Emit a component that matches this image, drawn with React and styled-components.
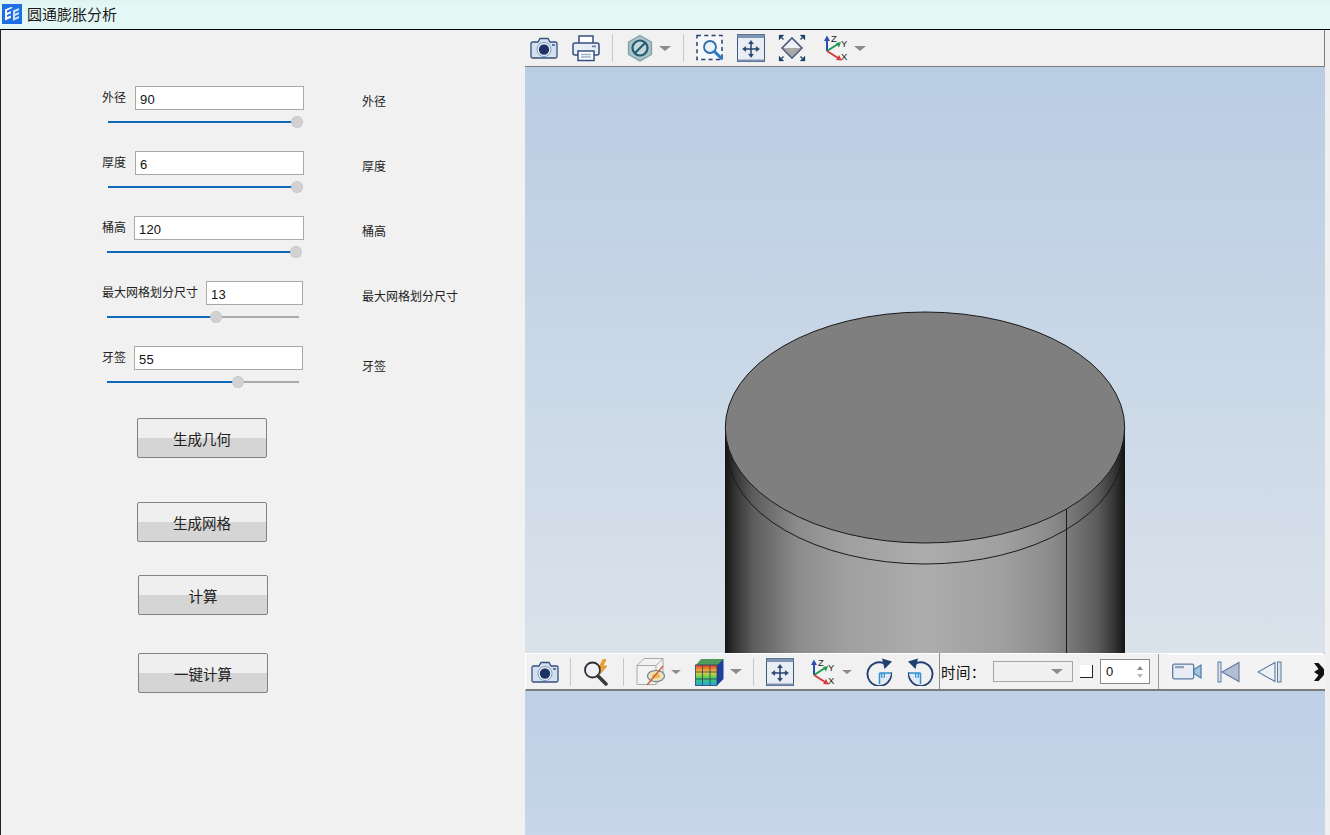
import React from "react";
import styled, { createGlobalStyle } from "styled-components";

const Global = createGlobalStyle`
  html, body { margin: 0; padding: 0; height: 100%; background: #f0f0f0; overflow: hidden; }
  #root { height: 100%; }
  * { box-sizing: border-box; }
`;

const CJK = `"Noto Sans CJK SC", "Liberation Sans", sans-serif`;

const Window = styled.div`
  width: 1330px;
  height: 835px;
  display: flex;
  flex-direction: column;
  font-family: ${CJK};
  color: #111;
  overflow: hidden;
`;
const TitleBar = styled.header`
  height: 30px;
  flex: none;
  display: flex;
  align-items: center;
  gap: 5px;
  padding: 0 0 1px 2px;
  background: linear-gradient(#dff3f0, #e3f8f5 6px);
  border-bottom: 1px solid #000;
`;
const TitleText = styled.span`
  font-size: 15px;
  line-height: 20px;
  color: #1a1a1a;
`;
const Body = styled.main`
  flex: 1;
  min-height: 0;
  display: flex;
`;
const ControlPanel = styled.section`
  width: 525px;
  flex: none;
  background: #f1f1f1;
  border-left: 1px solid #222;
  padding: 56px 0 0 100px;
`;
const ParamRow = styled.div`
  height: 65px;
  display: grid;
  grid-template-columns: 261px auto;
`;
const FieldColumn = styled.div`
  display: flex;
  flex-direction: column;
`;
const FieldLine = styled.label`
  width: ${(p) => p.$width}px;
  height: 24px;
  display: flex;
  align-items: center;
  padding-left: 1px;
`;
const FieldLabel = styled.span`
  width: ${(p) => p.$width}px;
  flex: none;
  font-size: 12px;
  line-height: 16px;
  margin-top: -3px;
  color: #222;
`;
const FieldInput = styled.input`
  flex: 1;
  min-width: 0;
  height: 24px;
  border: 1px solid #a9a9a9;
  background: #fff;
  padding: 2px 0 0 4px;
  font: 13px "Liberation Sans", sans-serif;
  letter-spacing: 0.2px;
  color: #111;
  outline: none;
`;
const Track = styled.div`
  position: relative;
  margin: 11px 0 0 ${(p) => p.$left}px;
  width: ${(p) => p.$width}px;
  height: 2px;
  background: #ababab;
`;
const TrackFill = styled.div`
  height: 100%;
  background: #0f69b9;
`;
const Thumb = styled.span`
  position: absolute;
  top: -5px;
  width: 12px;
  height: 12px;
  margin-left: -6px;
  border-radius: 50%;
  background: #d2d2d2;
  border: 1px dotted #bdbdbd;
`;
const ValueLabel = styled.span`
  font-size: 12px;
  line-height: 16px;
  color: #222;
  padding-top: ${(p) => p.$top}px;
`;
const Action = styled.button`
  display: block;
  width: 130px;
  height: 40px;
  margin: ${(p) => p.$top}px 0 0 ${(p) => p.$left}px;
  border: 1px solid #828282;
  border-radius: 2px;
  background: linear-gradient(#efefef 50%, #d5d5d5 50%);
  font: 14.5px ${CJK};
  color: #222;
  padding: 0;
`;

const Stage = styled.section`
  width: 800px;
  flex: none;
  display: flex;
  flex-direction: column;
`;
const TopBar = styled.div`
  height: 37px;
  flex: none;
  display: flex;
  align-items: center;
  padding-left: 5px;
  background: #f1f1f1;
  border-right: 1px solid #7b7b7b;
  border-bottom: 1px solid #7b7b7b;
`;
const Viewport = styled.div`
  position: relative;
  height: 586px;
  flex: none;
  overflow: hidden;
  background: linear-gradient(#b9cde3, #dae2eb);
`;
const ModelArt = styled.svg`
  position: absolute;
  inset: 0;
  display: block;
`;
const LowerBar = styled.div`
  height: 38px;
  flex: none;
  display: flex;
  align-items: center;
  padding-left: 5px;
  background: #f1f1f1;
  border-top: 1px solid #fff;
  border-left: 1px solid #fff;
  border-right: 2px solid #7b7b7b;
  border-bottom: 2px solid #7b7b7b;
`;
const LowerView = styled.div`
  flex: 1;
  background: linear-gradient(#bdd0e6, #c7d6e8);
`;
const Tool = styled.span`
  display: flex;
  flex: none;
  margin-left: ${(p) => p.$ml || 0}px;
`;
const Sep = styled.span`
  flex: none;
  width: 1px;
  height: ${(p) => p.$h || 28}px;
  margin-left: ${(p) => p.$ml || 0}px;
  background: ${(p) => p.$dark ? "#8d8d8d" : "#c8c8c8"};
`;
const Caret = styled.span`
  flex: none;
  width: 0;
  height: 0;
  margin-left: ${(p) => p.$ml || 0}px;
  border-left: ${(p) => p.$w || 6}px solid transparent;
  border-right: ${(p) => p.$w || 6}px solid transparent;
  border-top: ${(p) => (p.$w || 6) - 1}px solid #8b8b8b;
`;
const TimeLabel = styled.span`
  flex: none;
  margin-left: 1px;
  width: 52px;
  font-size: 14.5px;
  line-height: 18px;
  letter-spacing: 0.4px;
`;
const Combo = styled.div`
  width: 80px;
  height: 21px;
  flex: none;
  display: flex;
  align-items: center;
  justify-content: flex-end;
  padding-right: 9px;
  border: 1px solid #a5a5a5;
  background: #f0f0f0;
`;
const RaisedBox = styled.span`
  flex: none;
  width: 13px;
  height: 13px;
  margin-left: 7px;
  background: #fff;
  border-right: 1px solid #222;
  border-bottom: 1px solid #222;
`;
const Spin = styled.div`
  width: 50px;
  height: 25px;
  flex: none;
  margin-left: 7px;
  display: flex;
  align-items: center;
  justify-content: space-between;
  padding: 0 5px 0 5px;
  border: 1px solid #8a8a8a;
  background: #fff;
  font: 13px "Liberation Sans", sans-serif;
`;
const SpinArrows = styled.svg`
  display: block;
`;
const PlayGroup = styled.div`
  flex: 1;
  align-self: stretch;
  display: flex;
  align-items: center;
  margin-left: 8px;
  padding-left: 5px;
  background: #f3f3f3;
  border-left: 1px solid #9a9a9a;
  box-shadow: inset 9px 0 0 #f1f1f1, inset 0 1px 0 #fff;
`;
const SideStrip = styled.aside`
  flex: 1;
  background: #f0f0f0;
`;

const Camera = () => (
  <svg width="28" height="24" viewBox="0 0 28 24">
    <path d="M2 6h6l2-3.5h8L20 6h5.5a1.5 1.5 0 0 1 1.5 1.5v13a1.5 1.5 0 0 1-1.5 1.5h-23A1.5 1.5 0 0 1 1 20.500v-13A1.500 1.500 0 0 1 2.500 6z" fill="#d3e0ef" stroke="#36507f" strokeWidth="1.300" />
    <circle cx="14" cy="13.500" r="7" fill="#f4f7fb" stroke="#7f97bb" />
    <circle cx="14" cy="13.500" r="5.200" fill="#1d3566" />
    <rect x="22" y="8" width="3" height="2" fill="#5f7ba6" />
  </svg>
);
const Printer = () => (
  <svg width="28" height="28" viewBox="0 0 28 28">
    <path d="M7 9V2h14v7" fill="#fff" stroke="#35507e" strokeWidth="1.500" />
    <rect x="1" y="9" width="26" height="12" rx="2" fill="#e7edf5" stroke="#35507e" strokeWidth="1.500" />
    <rect x="20" y="11.500" width="4" height="1.800" fill="#6d84a8" />
    <path d="M6 17h16v9.500H6z" fill="#fff" stroke="#35507e" strokeWidth="1.500" />
    <path d="M9 20.500h10M9 23h10" stroke="#9db0ca" strokeWidth="1.600" />
  </svg>
);
const Hexagon = () => (
  <svg width="28" height="28" viewBox="0 0 28 28">
    <path d="M14 1.500 25.500 8v12.500L14 27 2.500 20.500V8z" fill="#a9c3c6" stroke="#7c9da3" strokeWidth="1.200" />
    <circle cx="14" cy="14" r="7.500" fill="#c4d5d8" stroke="#1f5d6f" strokeWidth="2.200" />
    <path d="M9 19 19 9" stroke="#1f5d6f" strokeWidth="2.200" />
  </svg>
);
const ZoomBox = () => (
  <svg width="28" height="28" viewBox="0 0 28 28">
    <rect x="1" y="1.500" width="25" height="24" fill="#f6f8fb" stroke="#27406f" strokeWidth="1.500" strokeDasharray="4 3.300" />
    <circle cx="14" cy="13" r="6" fill="#e9f1f9" stroke="#2f6da8" strokeWidth="1.800" />
    <path d="m18.500 17.500 7 7" stroke="#2b7cc0" strokeWidth="3" strokeLinecap="round" />
  </svg>
);
const FitView = () => (
  <svg width="28" height="28" viewBox="0 0 28 28">
    <rect x="0.500" y="0.500" width="27" height="27" fill="#e9eef5" stroke="#40597f" />
    <rect x="0.500" y="0.500" width="27" height="3.500" fill="#7e92b1" />
    <rect x="0.500" y="25.500" width="27" height="2" fill="#7e92b1" />
    <g stroke="#26426f" strokeWidth="1.500" fill="#26426f">
      <path d="M14 9v12M8 15h12" />
      <path d="m14 6.500 2.500 3.200h-5zM14 23.500l2.500-3.200h-5zM5.500 15l3.200-2.500v5zM22.500 15l-3.200-2.500v5z" strokeWidth=".5" />
    </g>
  </svg>
);
const Diamond = () => (
  <svg width="28" height="28" viewBox="0 0 28 28">
    <path d="M14 4 24 14 14 24 4 14z" fill="#eef1f5" stroke="#4a5f80" strokeWidth="1.300" />
    <path d="M14 14h10L14 24 4 14z" fill="#a9a9a9" />
    <path d="M14 4 24 14 14 24 4 14z" fill="none" stroke="#4a5f80" strokeWidth="1.300" />
    <g fill="#26426f" stroke="#26426f">
      <path d="M1 1h5L1 6zM27 1h-5l5 5zM1 27h5l-5-5zM27 27h-5l5-5z" strokeWidth=".3" />
      <path d="m2 2 3.500 3.500M26 2l-3.500 3.500M2 26l3.500-3.500M26 26l-3.500-3.500" strokeWidth="1.400" fill="none" />
    </g>
  </svg>
);
const Axes = () => (
  <svg width="26" height="28" viewBox="0 0 26 28">
    <path d="M4 17V6" stroke="#2a4fb0" strokeWidth="2" />
    <path d="M4 1.500 7 7H1z" fill="#2a4fb0" />
    <path d="M4 17 15 10" stroke="#1e9a50" strokeWidth="2" />
    <path d="m18 8-2 5.500-3-4.500z" fill="#1e9a50" />
    <path d="M4 17 15 24" stroke="#d63a3a" strokeWidth="2" />
    <path d="m19 26.500-6-.5 3-5z" fill="#d63a3a" />
    <text x="8" y="8" fontFamily="Liberation Sans, sans-serif" fontSize="9.500" fill="#222">Z</text>
    <text x="18" y="13" fontFamily="Liberation Sans, sans-serif" fontSize="9.500" fill="#222">Y</text>
    <text x="18" y="26" fontFamily="Liberation Sans, sans-serif" fontSize="9.500" fill="#222">X</text>
  </svg>
);
const QuickSearch = () => (
  <svg width="29" height="28" viewBox="0 0 29 28">
    <path d="M20 1.500 15.500 10h4L17 16l7-8h-4l3-6.500z" fill="#f3a21f" stroke="#d8801a" strokeWidth=".6" />
    <circle cx="9.500" cy="12" r="7.500" fill="#eef2f6" stroke="#2e2e2e" strokeWidth="1.800" />
    <path d="m15 18 8 8" stroke="#3a3a3a" strokeWidth="3.500" strokeLinecap="round" />
  </svg>
);
const SectionCube = () => (
  <svg width="30" height="29" viewBox="0 0 30 29">
    <path d="M1 8.500 8 1.500h19v19l-7 7H1z" fill="#f2f2f2" stroke="#a9a9a9" />
    <path d="M1 8.500h19v19M20 8.500l7-7" fill="none" stroke="#a9a9a9" />
    <ellipse cx="20" cy="19" rx="8.500" ry="5.500" fill="#f0e2b8" stroke="#6d7f98" strokeWidth="1.200" />
    <ellipse cx="20" cy="19" rx="4" ry="2.300" fill="#e7b95a" />
    <path d="M11 28 27 9" stroke="#d05a30" strokeWidth="1.300" />
  </svg>
);
const ColorCube = () => (
  <svg width="29" height="28" viewBox="0 0 29 28">
    <defs>
      <linearGradient id="heat" x1="0" y1="0" x2="0" y2="1">
        <stop offset="0" stopColor="#e23a2a" />
        <stop offset=".35" stopColor="#f0d030" />
        <stop offset=".65" stopColor="#3fce5a" />
        <stop offset="1" stopColor="#26a7e6" />
      </linearGradient>
    </defs>
    <path d="M6 1h22.500v20L22 27.500V7.500z" fill="#1f3f9c" />
    <path d="M6 1h22.500L22 7.500H.5z" fill="#4e9a5a" />
    <rect x=".5" y="7" width="21.500" height="20.500" fill="url(#heat)" stroke="#28406e" strokeWidth=".8" />
    <path d="M7.500 7v20.500M15 7v20.500M.5 14h21.500M.5 21h21.500" stroke="#33456b" strokeWidth=".9" />
  </svg>
);
const Rotate = ({ flip }) => (
  <svg width="27" height="28" viewBox="0 0 27 28" style={flip ? { transform: "scaleX(-1)" } : undefined}>
    <path d="M18 5.300A11.800 11.800 0 1 0 25 14.500" fill="none" stroke="#26426f" strokeWidth="1.900" />
    <path d="M16 .5 26 3.500 18.500 11z" fill="#1f3f6f" />
    <path d="M13.500 15V26a11.500 11.500 0 0 0 11.500-11z" fill="#dfeaf6" />
    <path d="M13.500 15V26M13.500 15H25" stroke="#2f8fd0" strokeWidth="1.500" />
    <rect x="15.500" y="16" width="3" height="3" fill="none" stroke="#2f8fd0" />
  </svg>
);
const VideoCam = () => (
  <svg width="30" height="17" viewBox="0 0 30 17">
    <rect x=".7" y="1.200" width="21" height="14.600" rx="1.500" fill="#e8edf4" stroke="#5d7aa3" strokeWidth="1.300" />
    <rect x="3" y="3" width="9" height="2.300" fill="#8fa3bf" />
    <path d="M22 6.500 29 2v13l-7-4.500z" fill="#9fc6de" stroke="#4f7aa8" strokeWidth="1.200" />
  </svg>
);
const FirstFrame = () => (
  <svg width="23" height="22" viewBox="0 0 23 22">
    <rect x="1" y="1" width="3" height="20" fill="#dbe3ee" stroke="#5d7aa3" />
    <path d="M22 1.500v19L5 11z" fill="#b4c0cf" stroke="#5d7aa3" strokeWidth="1.100" />
  </svg>
);
const PrevFrame = () => (
  <svg width="25" height="22" viewBox="0 0 25 22">
    <path d="M18 1.500v19L1 11z" fill="#eef2f7" stroke="#5d7aa3" strokeWidth="1.100" />
    <rect x="20.500" y="1" width="3.500" height="20" fill="#dbe3ee" stroke="#5d7aa3" />
  </svg>
);
const Overflow = () => (
  <svg width="12" height="22" viewBox="0 0 12 22">
    <path d="M1 2h4.500l5.500 6v6l-5.500 6H1l4.500-6-4.500-3 4.500-3z" fill="#111" />
  </svg>
);

const Model = () => (
  <ModelArt width="800" height="586" viewBox="525 67 800 586">
    <defs>
      <linearGradient id="wall" gradientUnits="userSpaceOnUse" x1="725" y1="0" x2="1125" y2="0">
        <stop offset="0" stopColor="#151515" />
        <stop offset=".03" stopColor="#383838" />
        <stop offset=".07" stopColor="#5c5c5c" />
        <stop offset=".18" stopColor="#8b8b8b" />
        <stop offset=".3" stopColor="#9f9f9f" />
        <stop offset=".5" stopColor="#adadad" />
        <stop offset=".7" stopColor="#9f9f9f" />
        <stop offset=".82" stopColor="#8a8a8a" />
        <stop offset=".93" stopColor="#5c5c5c" />
        <stop offset=".97" stopColor="#383838" />
        <stop offset="1" stopColor="#151515" />
      </linearGradient>
    </defs>
    <path d="M725 428V654H1125V428z" fill="url(#wall)" />
    <path d="M727 449A198 115 0 0 0 1123 449" fill="none" stroke="#1a1a1a" strokeWidth="1" />
    <path d="M1066.500 509V653" stroke="#1a1a1a" strokeWidth="1" />
    <ellipse cx="925" cy="427.500" rx="199.700" ry="115.500" fill="#7f7f7f" stroke="#1a1a1a" strokeWidth="1" />
  </ModelArt>
);

const params = [
  { label: "外径", value: "90", labelW: 33, lineW: 203, left: 7, track: 189, pct: 100, y: 7, name: "外径" },
  { label: "厚度", value: "6", labelW: 33, lineW: 203, left: 7, track: 189, pct: 100, y: 7, name: "厚度" },
  { label: "桶高", value: "120", labelW: 32, lineW: 203, left: 6, track: 189, pct: 100, y: 7, name: "桶高" },
  { label: "最大网格划分尺寸", value: "13", labelW: 104, lineW: 202, left: 6, track: 192, pct: 57, y: 7, name: "最大网格划分尺寸" },
  { label: "牙签", value: "55", labelW: 32, lineW: 202, left: 6, track: 192, pct: 68, y: 12, name: "牙签" },
];
const actions = [
  { text: "生成几何", top: 7, left: 36 },
  { text: "生成网格", top: 44, left: 36 },
  { text: "计算", top: 33, left: 37 },
  { text: "一键计算", top: 38, left: 37 },
];

export default function App() {
  return (
    <Window>
      <Global />
      <TitleBar>
        <svg width="20" height="20" viewBox="0 0 20 20">
          <rect width="20" height="20" fill="#1f6fe4" />
          <path d="M3 5.500 9 3l2 .8L5 6.500v2.300l4-1.600v2.100L5 11v2l4-1.500v2.200L3 16.500z" fill="#fff" />
          <path d="m11 6.500 6-2.500v2.300l-4 1.700v1.700l4-1.700v2.200l-4 1.700v1.800l4-1.700v2.200l-6 2.600z" fill="#cfe2fb" />
        </svg>
        <TitleText>圆通膨胀分析</TitleText>
      </TitleBar>
      <Body>
        <ControlPanel>
          {params.map((p) => (
            <ParamRow key={p.label}>
              <FieldColumn>
                <FieldLine $width={p.lineW}>
                  <FieldLabel $width={p.labelW}>{p.label}</FieldLabel>
                  <FieldInput defaultValue={p.value} readOnly />
                </FieldLine>
                <Track $left={p.left} $width={p.track}>
                  <TrackFill style={{ width: `${p.pct}%` }} />
                  <Thumb style={{ left: `${p.pct}%` }} />
                </Track>
              </FieldColumn>
              <ValueLabel $top={p.y}>{p.name}</ValueLabel>
            </ParamRow>
          ))}
          {actions.map((a) => (
            <Action key={a.text} $top={a.top} $left={a.left}>{a.text}</Action>
          ))}
        </ControlPanel>
        <Stage>
          <TopBar>
            <Tool><Camera /></Tool>
            <Tool $ml={14}><Printer /></Tool>
            <Sep $ml={12} />
            <Tool $ml={13}><Hexagon /></Tool>
            <Caret $ml={5} />
            <Sep $ml={12} />
            <Tool $ml={12}><ZoomBox /></Tool>
            <Tool $ml={13}><FitView /></Tool>
            <Tool $ml={13}><Diamond /></Tool>
            <Tool $ml={17}><Axes /></Tool>
            <Caret $ml={5} />
          </TopBar>
          <Viewport><Model /></Viewport>
          <LowerBar>
            <Tool><Camera /></Tool>
            <Sep $ml={11} />
            <Tool $ml={12}><QuickSearch /></Tool>
            <Sep $ml={11} />
            <Tool $ml={12}><SectionCube /></Tool>
            <Caret $ml={5} $w={5} />
            <Tool $ml={14}><ColorCube /></Tool>
            <Caret $ml={6} />
            <Sep $ml={11} />
            <Tool $ml={12}><FitView /></Tool>
            <Tool $ml={16}><Axes /></Tool>
            <Caret $ml={6} $w={5} />
            <Tool $ml={14}><Rotate /></Tool>
            <Tool $ml={14}><Rotate flip /></Tool>
            <Sep $ml={5} $h={37} $dark />
            <TimeLabel>时间：</TimeLabel>
            <Combo><Caret $w={6} /></Combo>
            <RaisedBox />
            <Spin>
              <span>0</span>
              <SpinArrows width="8" height="14" viewBox="0 0 8 14">
                <path d="M4 1 7 5H1z" fill="#8a8a8a" />
                <path d="M4 13 7 9H1z" fill="#bbb" />
              </SpinArrows>
            </Spin>
            <PlayGroup>
              <Tool $ml={8}><VideoCam /></Tool>
              <Tool $ml={15}><FirstFrame /></Tool>
              <Tool $ml={17}><PrevFrame /></Tool>
              <Tool $ml={31}><Overflow /></Tool>
            </PlayGroup>
          </LowerBar>
          <LowerView />
        </Stage>
        <SideStrip />
      </Body>
    </Window>
  );
}
